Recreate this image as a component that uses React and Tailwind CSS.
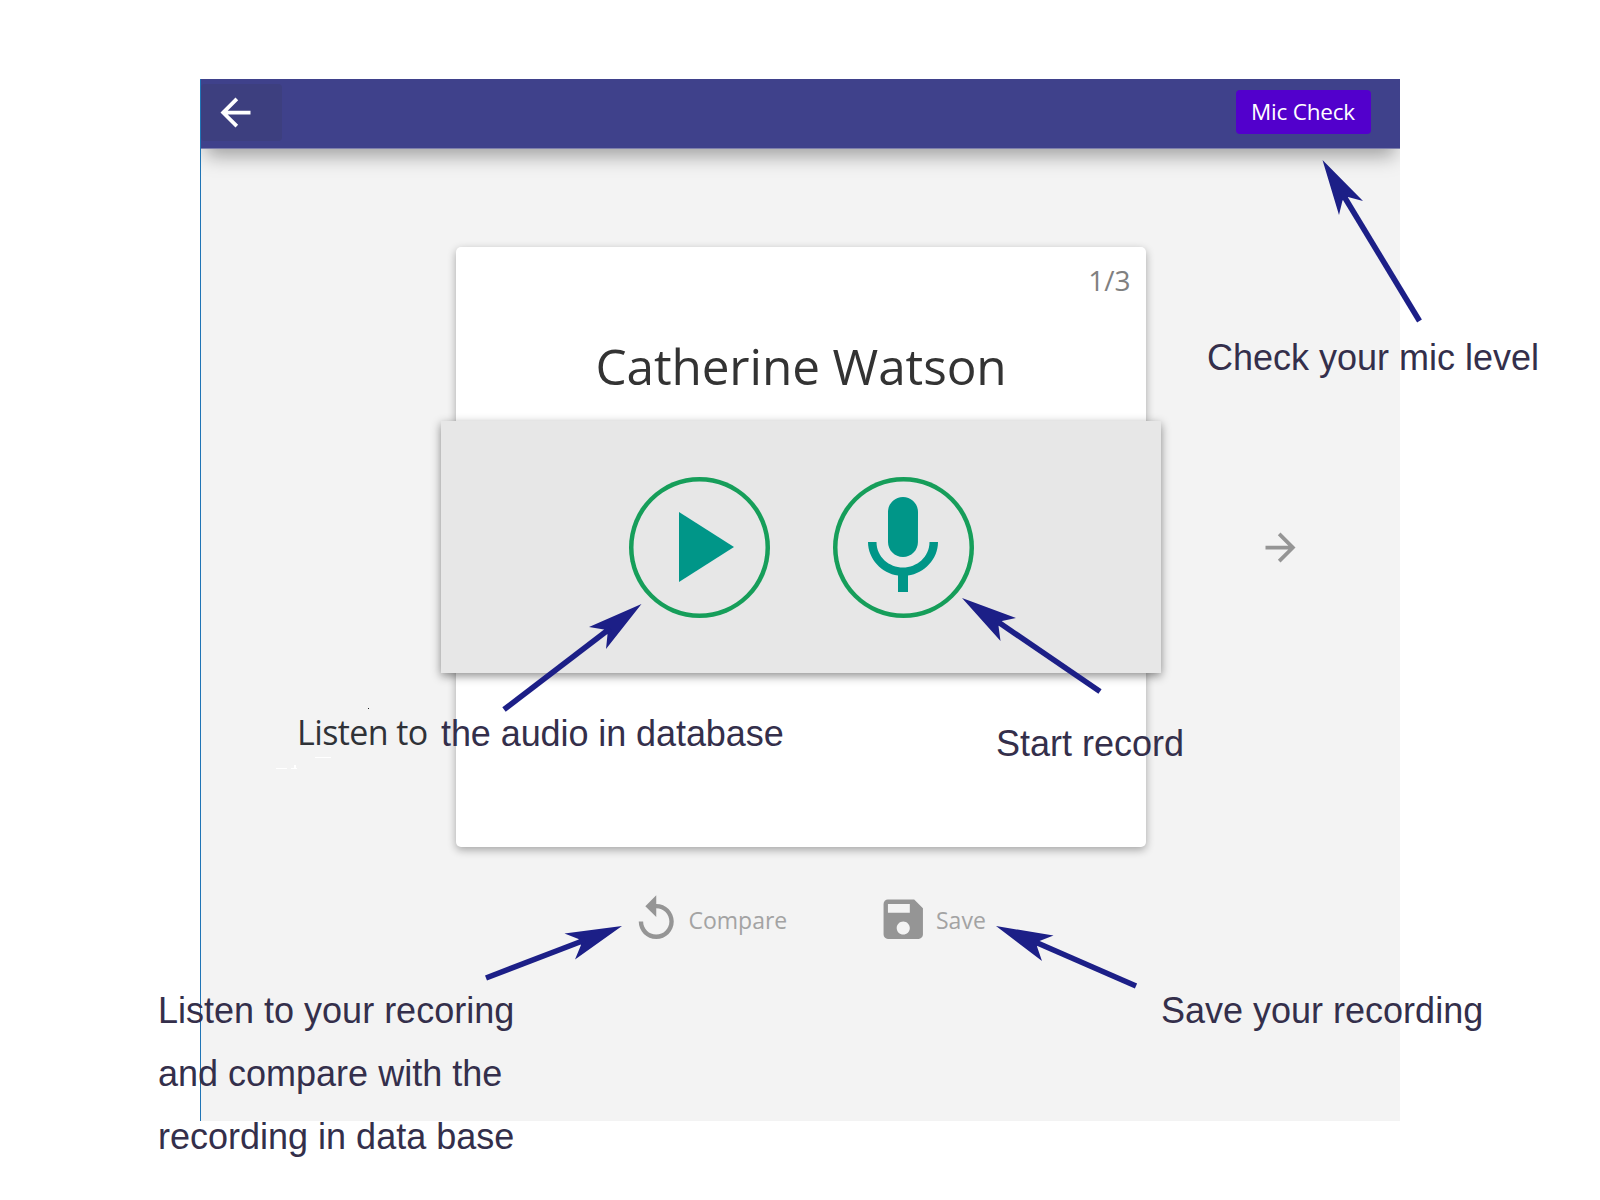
import React from "react";

const UI_FONT = "font-['Open_Sans','Noto_Sans',sans-serif]";

function Icon({ d, className }) {
  return (
    <svg viewBox="0 0 24 24" fill="currentColor" className={className} aria-hidden="true">
      <path d={d} />
    </svg>
  );
}

const ICONS = {
  back: "M20 11H7.83l5.59-5.59L12 4l-8 8 8 8 1.41-1.41L7.83 13H20v-2z",
  next: "M12 4l-1.41 1.41L16.17 11H4v2h12.17l-5.58 5.59L12 20l8-8z",
  play: "M8 5v14l11-7z",
  mic: "M12 14c1.66 0 2.99-1.34 2.99-3L15 5c0-1.66-1.34-3-3-3S9 3.34 9 5v6c0 1.66 1.34 3 3 3zm5.3-3c0 3-2.54 5.1-5.3 5.1S6.7 14 6.7 11H5c0 3.41 2.72 6.23 6 6.72V21h2v-3.28c3.28-.48 6-3.3 6-6.72h-1.7z",
  replay:
    "M12 5V1L7 6l5 5V7c3.31 0 6 2.69 6 6s-2.69 6-6 6-6-2.69-6-6H4c0 4.42 3.58 8 8 8s8-3.58 8-8-3.58-8-8-8z",
  save: "M17 3H5c-1.11 0-2 .9-2 2v14c0 1.1.89 2 2 2h14c1.1 0 2-.9 2-2V7l-4-4zm-5 16c-1.66 0-3-1.34-3-3s1.34-3 3-3 3 1.34 3 3-1.34 3-3 3zm3-10H5V5h10v4z",
};

// Each arrow: head outline (tip, wing, notch, wing) and shaft from notch to tail.
const ARROWS = [
  { head: "1322.5,160 1363,201 1348,197 1342.5,200.5 1339,215", shaft: [1342, 193, 1419.5, 321] },
  { head: "641.5,604 589,627 604,629.5 607.5,634.5 606,649", shaft: [610, 628.5, 504, 709.5] },
  { head: "962,598 1016,618 1002,621 998.5,626 1000.5,641", shaft: [996, 620.5, 1100, 691.5] },
  { head: "622,926 564.5,933.5 578.5,939 581,945 575,959.5", shaft: [585, 940, 486, 978] },
  { head: "996,926 1053.5,935.5 1039.5,941 1037,946.5 1042,961", shaft: [1034, 941.5, 1136, 986] },
];

function RoundButton({ d, label }) {
  return (
    <button
      aria-label={label}
      className="flex h-[141px] w-[141px] items-center justify-center rounded-full text-[#009688] shadow-[inset_0_0_0_4.5px_#169e5a]"
    >
      <Icon d={d} className="h-[120px] w-[120px] shrink-0" />
    </button>
  );
}

function Note({ className, children }) {
  return (
    <p
      className={`absolute whitespace-nowrap font-['Liberation_Sans',Arial,sans-serif] text-[36px] leading-[63px] text-[#342f4b] ${className}`}
    >
      {children}
    </p>
  );
}

export default function App() {
  return (
    <div className={`relative h-[1200px] w-[1600px] overflow-hidden bg-white pt-[79px] pl-[200px] ${UI_FONT}`}>
      <main className="flex h-[1042px] w-[1200px] flex-col overflow-hidden border-l border-[#1f74b5] bg-[#f3f3f3]">
        <header className="flex h-[70px] shrink-0 justify-between border-b border-[#7f80ac] bg-[#3f418b] shadow-[0_12px_18px_-5px_rgba(0,0,0,0.34)]">
          <button aria-label="Back" className="mt-[5px] flex h-[57px] w-[80.5px] items-center rounded-[4px] bg-[#3d3f7f] pl-[12px] text-white">
            <Icon d={ICONS.back} className="h-[45px] w-[45px]" />
          </button>
          <button className="mt-[11px] mr-[29px] flex h-[43.5px] w-[135px] items-center justify-center rounded-[4px] bg-[#5200cc] pr-[1px] text-[22.5px] text-white">
            <span className="tracking-[-0.2px]">Mic Check</span>
          </button>
        </header>

        <section className="mt-[98.4px] flex">
          <div className="ml-[240px] flex w-[720px] flex-col items-center">
            <article className="flex h-[600px] w-[690px] flex-col items-center rounded-[5px] bg-white shadow-[0_3px_9px_rgba(0,0,0,0.32)]">
              <div className="flex h-[174px] w-full flex-col">
                <span className="mt-[12.6px] mr-[15.5px] self-end text-[28px] leading-[40px] text-[#808080]">1/3</span>
                <h1 className="mt-[31.5px] self-center whitespace-nowrap text-[49.5px] leading-[70px] text-[#333333]">
                  <span className="tracking-[-0.1px]">Catherine Watson</span>
                </h1>
              </div>
              <div className="flex h-[252px] w-[720px] shrink-0 items-center justify-center gap-[63px] bg-[#e7e7e7] shadow-[0_3px_9px_rgba(0,0,0,0.45)]">
                <RoundButton d={ICONS.play} label="Play" />
                <RoundButton d={ICONS.mic} label="Record" />
              </div>
            </article>
          </div>
          <button aria-label="Next" className="mt-[277.5px] ml-[97px] h-[45px] w-[45px] text-[#959595]">
            <Icon d={ICONS.next} className="h-[45px] w-[45px]" />
          </button>
        </section>

        <footer className="mt-[45px] flex h-[53px] items-center text-[23px] text-[#a3a3a3]">
          <button className="ml-[429px] flex w-[247px] items-center">
            <Icon d={ICONS.replay} className="h-[52.5px] w-[52.5px] text-[#959595]" />
            <span className="mt-[2px] ml-[6px]">Compare</span>
          </button>
          <button className="flex items-center">
            <Icon d={ICONS.save} className="h-[52.5px] w-[52.5px] text-[#959595]" />
            <span className="mt-[2px] ml-[6.5px]">Save</span>
          </button>
        </footer>
      </main>

      <svg viewBox="0 0 1600 1200" className="absolute inset-0 h-[1200px] w-[1600px]" aria-hidden="true">
        {ARROWS.map(({ head, shaft }) => (
          <g key={head} fill="#1c1f87" stroke="none">
            <polygon points={head} />
            <line x1={shaft[0]} y1={shaft[1]} x2={shaft[2]} y2={shaft[3]} stroke="#1c1f87" strokeWidth="5.6" />
          </g>
        ))}
        <rect x="368" y="708" width="1" height="1" fill="#222" />
        <path d="M276 768h11v1h-11zM291 768h6v1h-6zM294 765h2v3h-2zM315 757h16v1h-16z" fill="#fff" />
      </svg>

      <Note className="top-[326px] left-[1207px]">Check your mic level</Note>
      <p className="absolute top-[701px] left-[297px] text-[34px] leading-[63px] whitespace-nowrap text-[#2f3237]">
        <span className="tracking-[-0.6px]">Listen to</span>
      </p>
      <Note className="top-[702px] left-[441px] tracking-[-0.08px]">the audio in database</Note>
      <Note className="top-[712px] left-[996px]">Start record</Note>
      <Note className="top-[979px] left-[1161px]">Save your recording</Note>
      <Note className="top-[979px] left-[158px]">
        Listen to your recoring
        <br />
        and compare with the
        <br />
        recording in data base
      </Note>
    </div>
  );
}
